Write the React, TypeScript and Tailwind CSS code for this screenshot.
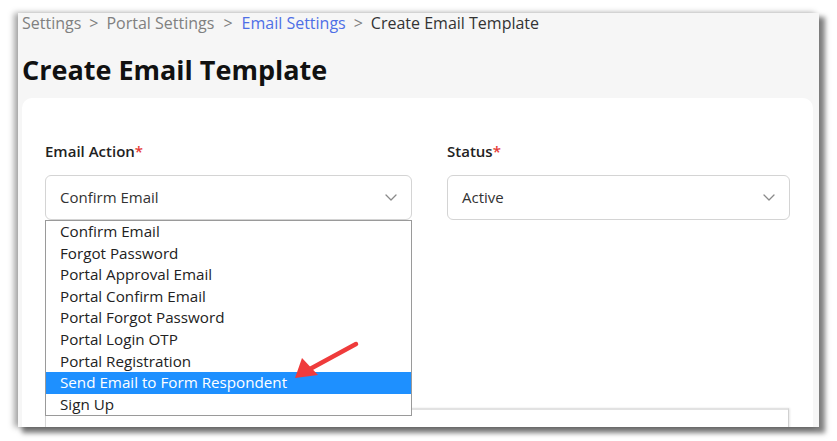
import React from 'react';

const options = [
  'Confirm Email',
  'Forgot Password',
  'Portal Approval Email',
  'Portal Confirm Email',
  'Portal Forgot Password',
  'Portal Login OTP',
  'Portal Registration',
  'Send Email to Form Respondent',
  'Sign Up',
];

const Chevron = () => (
  <svg width="12" height="7" viewBox="0 0 12 7" fill="none" className="text-[#8a8a8a]">
    <path d="M1 1l5 5 5-5" stroke="currentColor" strokeWidth="1.3" strokeLinecap="round" strokeLinejoin="round" />
  </svg>
);

const App: React.FC = () => {
  const selected = 'Send Email to Form Respondent';

  return (
    <div className="relative w-[837px] h-[441px] bg-white overflow-hidden pl-[18px] pt-[13px] font-['Open_Sans',sans-serif]">
      {/* Screenshot frame */}
      <div className="w-[801px] h-[414px] bg-[#f6f6f6] overflow-hidden shadow-[5px_5px_5px_1px_rgba(0,0,0,0.5),-4px_0_6px_rgba(0,0,0,0.35)] pl-[4px]">
        {/* Breadcrumb */}
        <div className="flex items-center gap-[8px] text-[16px] leading-[20px] text-[#808080]">
          <span>Settings</span>
          <span>&gt;</span>
          <span>Portal Settings</span>
          <span className="ml-[1px]">&gt;</span>
          <span className="ml-[1px] text-[#4e6fe6]">Email Settings</span>
          <span>&gt;</span>
          <span className="text-[#333]">Create Email Template</span>
        </div>

        <h1 className="mt-[21px] text-[27px] leading-[32px] font-bold text-[#111]">Create Email Template</h1>

        {/* Card */}
        <div className="mt-[12px] mr-[6px] bg-white rounded-[10px] h-[400px] px-[23px] pt-[42px]">
          <div className="grid grid-cols-[367px_343px] gap-x-[35px]">
            <div className="relative">
              <label className="block text-[15px] leading-[22px] font-semibold text-[#222]">
                Email Action<span className="text-[#e53935]">*</span>
              </label>
              <div className="mt-[13px] h-[45px] border border-[#d4d4d4] rounded-[6px] flex items-center justify-between pl-[14px] pr-[14px] text-[15px] text-[#333]">
                <span>Confirm Email</span>
                <Chevron />
              </div>
              {/* Open list */}
              <ul className="absolute left-0 top-[80px] w-full bg-white border border-[#9a9a9a] z-10 text-[15.2px] leading-[21.6px] text-[#222]">
                {options.map((o) => (
                  <li
                    key={o}
                    className={o === selected ? 'pl-[14px] bg-[#1e90ff] text-white' : 'pl-[14px]'}
                  >
                    {o}
                  </li>
                ))}
              </ul>
            </div>

            <div>
              <label className="block text-[15px] leading-[22px] font-semibold text-[#222]">
                Status<span className="text-[#e53935]">*</span>
              </label>
              <div className="mt-[13px] h-[45px] border border-[#d4d4d4] rounded-[6px] flex items-center justify-between pl-[14px] pr-[14px] text-[15px] text-[#333]">
                <span>Active</span>
                <Chevron />
              </div>
            </div>
          </div>

          {/* Editor box (partly hidden) */}
          <div className="mt-[188px] w-[744px] h-[60px] border-t-2 border-t-[#e2e2e2] border-l border-l-[#d6d6d6] border-r border-r-[#d0d0d0] shadow-[1px_0_2px_rgba(0,0,0,0.1)]" />
        </div>
      </div>

      {/* Annotation arrow */}
      <svg className="absolute left-0 top-0 z-20 pointer-events-none" width="837" height="441" viewBox="0 0 837 441">
        <line x1="356" y1="344" x2="310" y2="369" stroke="#ef3b3b" strokeWidth="4.5" strokeLinecap="round" />
        <polygon points="295,378 302,358 318,375" fill="#ef3b3b" />
      </svg>
    </div>
  );
};

export default App;
